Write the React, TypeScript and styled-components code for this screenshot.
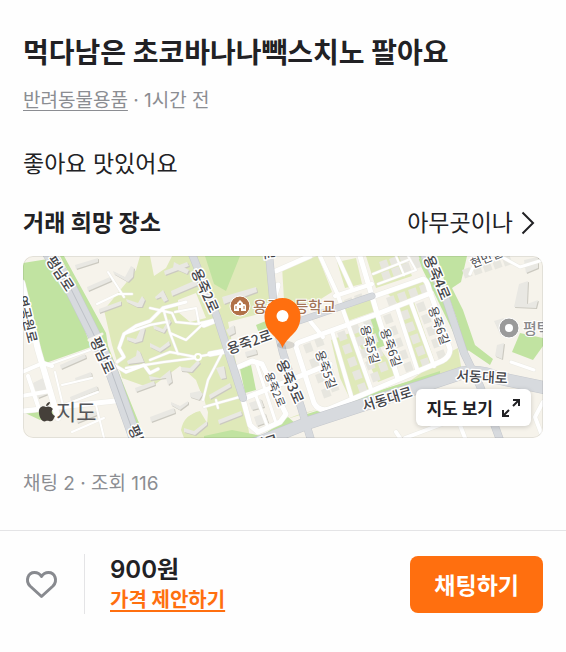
import React from 'react';
import styled, { createGlobalStyle } from 'styled-components';

const GlobalStyle = createGlobalStyle`
  * { box-sizing: border-box; }
  body {
    margin: 0;
    background: #fefefe;
    color: #212124;
    font-family: Inter, 'Noto Sans CJK KR', sans-serif;
    -webkit-font-smoothing: antialiased;
  }
  button { font-family: inherit; cursor: pointer; }
`;

const Page = styled.div`
  display: flex;
  flex-direction: column;
`;

const Article = styled.main`
  display: flex;
  flex-direction: column;
  padding: 33px 23px 32px;
`;

const Title = styled.h1`
  margin: 0;
  font-size: 28px;
  line-height: 40px;
  font-weight: 700;
`;

const Meta = styled.p`
  margin: 0;
  font-size: 19px;
  line-height: 28px;
  color: #8b8d92;
`;

const CategoryLink = styled.a`
  color: inherit;
  text-underline-offset: 3px;
`;

const Description = styled.p`
  margin: 0;
  font-size: 23px;
  line-height: 32px;
`;

const PlaceRow = styled.div`
  display: flex;
  align-items: center;
  justify-content: space-between;
`;

const PlaceHeading = styled.h2`
  margin: 0;
  font-size: 23px;
  line-height: 32px;
  font-weight: 700;
`;

const PlaceButton = styled.button`
  display: flex;
  align-items: center;
  gap: 8px;
  padding: 0 8px 0 0;
  border: 0;
  background: none;
  color: inherit;
  font-size: 23px;
  line-height: 32px;
`;

const Spacer = styled.div<{ $size: number }>`
  height: ${({ $size }) => $size}px;
`;

const MapCard = styled.section`
  position: relative;
  height: 182px;
  border-radius: 10px;
  overflow: hidden;
  background: #f6f3eb;

  &::after {
    content: '';
    position: absolute;
    inset: 0;
    border: 1px solid rgba(0, 0, 0, 0.08);
    border-radius: inherit;
    pointer-events: none;
  }
`;

const MapCanvas = styled.svg`
  display: block;
  width: 100%;
  height: 100%;
  font-family: 'Noto Sans CJK KR', sans-serif;
`;

const MapButton = styled.button`
  position: absolute;
  right: 12px;
  bottom: 12px;
  display: flex;
  align-items: center;
  gap: 8px;
  height: 37px;
  padding: 0 10px;
  border: 0;
  border-radius: 6px;
  background: #fff;
  color: #212124;
  font-size: 17px;
  font-weight: 700;
  box-shadow: 0 1px 5px rgba(0, 0, 0, 0.18);
`;

const BottomBar = styled.footer`
  display: flex;
  align-items: center;
  padding: 23px 23px 37px 24px;
  border-top: 1px solid #e4e4e6;
`;

const LikeButton = styled.button`
  display: flex;
  padding: 0;
  border: 0;
  background: none;
`;

const PriceBlock = styled.div`
  display: flex;
  flex: 1;
  flex-direction: column;
  align-items: flex-start;
  margin-left: 25px;
  padding-left: 25px;
  border-left: 1px solid #e4e4e6;
`;

const Price = styled.strong`
  font-size: 24px;
  line-height: 32px;
  font-weight: 600;
`;

const OfferLink = styled.a`
  color: #ff6f0f;
  font-size: 20px;
  line-height: 28px;
  font-weight: 700;
  text-underline-offset: 3px;
  text-decoration-thickness: 2px;
`;

const ChatButton = styled.button`
  height: 57px;
  padding: 0 24px;
  border: 0;
  border-radius: 8px;
  background: #ff6f0f;
  color: #fff;
  font-size: 23px;
  font-weight: 700;
`;

const LIGHT_GREEN = [
  'M140 256H268L274 310L228 322L243 398L250 438H206L208 412L196 380L180 366L150 388L122 378L112 345L104 310L126 283L136 270Z',
  'M282 266L318 256L332 292L300 312L284 300Z',
  'M337 262L356 258L362 284L345 288Z',
  'M366 256H404L412 276L376 288Z',
  'M341 302L372 298L376 311L345 322Z',
  'M331 340L350 333L372 392L350 399L340 378Z',
  'M352 330L364 326L398 374L378 382Z',
  'M384 290L430 276L436 292L398 304Z',
  'M398 306L414 302L436 365L418 368Z',
  'M284 420L410 381L450 352L458 348L462 372L300 414Z',
  'M181 430Q184 414 200 411L216 438H184Z',
];

const PARK_GREEN = [
  'M23 263L48 259L70 290L91 347L43 364L32 315L23 296Z',
  'M205 256H240L226 291L214 284Z',
  'M366 321L378 317L386 345L376 349Z',
  'M437 256H467L461 282L452 288L463 310L475 345L493 359L490 365L468 350L450 300Z',
  'M520 333L543 338V346L533 360L512 352Z',
  'M416 256L430 256L470 350L463 352Z',
  'M240 369L251 365L256 390L245 393Z',
  'M307 414L326 408L440 371L440 376L318 421L307 421Z',
  'M204 436L232 430L262 436L288 417L296 424L256 440H204Z',
  'M60 256H64L100 322L106 333L108 346L141 428L136 425L98 330Z',
  'M23 412L48 407L57 415L40 420Z',
  'M256 325L268 320L269 334L260 336Z',
];

const MINOR_ROADS = [
  { d: 'M22 283L38 350L58 418', w: 6 },
  { d: 'M22 372L43 363L52 366M28 376L38 406M22 396L50 391', w: 4 },
  { d: 'M22 411L115 401', w: 5 },
  { d: 'M48 365L90 350M55 372L64 410M62 385L92 378M64 405L98 392M72 432L104 418M96 405L104 438', w: 2 },
  { d: 'M97 304L118 294L132 294M108 272L124 297', w: 2 },
  { d: 'M117 362L124 357L119 348L124 334L136 326L150 321L163 308L186 302M114 365L126 372L144 365L150 373L158 369', w: 3 },
  { d: 'M150 360L170 352L196 357L228 351M126 368L164 362L196 358M163 308L170 333L178 354M124 334L150 325L166 322M150 308L172 313L176 322L196 324L213 320M175 312L196 308L199 324M170 333L186 340L204 323M222 353L208 380L203 400M204 407L243 396M216 400L218 408', w: 2 },
  { d: 'M210 354L226 351M204 325L214 321', w: 5 },
  { d: 'M236 368L252 361L262 364L282 406L286 414L280 422L258 432L250 425L243 399L330 364', w: 5 },
  { d: 'M256 362L276 423M256 396L268 428', w: 3 },
  { d: 'M276 271L310 256M272 306L278 285', w: 5 },
  { d: 'M320 256L337 293L371 389M337 256L352 289M335 296L372 284', w: 4 },
  { d: 'M360 256L377 313L398 379', w: 5 },
  { d: 'M372 297L423 279Q427 280 429 289L450 349Q450 357 442 361L329 409Q319 412 314 403L297 350Q294 344 300 342L377 314L431 293', w: 5 },
  { d: 'M332 331L352 399M397 307L418 372M411 303L434 366M310 321L323 337', w: 4 },
  { d: 'M396 256L404 275M408 256L416 270M373 274L408 260M378 284L416 270', w: 2 },
  { d: 'M470 274L478 256M511 362L534 370M500 256L520 267L543 260', w: 3 },
  { d: 'M543 402L535 417L543 438M465 438L458 420L466 397M400 438L396 432M405 438L450 421M500 437L493 412', w: 4 },
];

const MAJOR_ROADS = [
  { d: 'M48 252L70 287L93 333L112 373L137 443', w: 12 },
  { d: 'M192 254L217 317L243 398', w: 7 },
  { d: 'M269 254L275 320L283 353L301 407L311 440', w: 7 },
  { d: 'M296 322L372 296', w: 6 },
  { d: 'M424 254L446 299L464 353L480 386L500 440', w: 7 },
  { d: 'M250 446L305 424L363 405L420 387L462 373Q482 370 498 378L546 388', w: 12 },
];

const BUILDINGS = [
  'M75 265L98 258L98 262L76 269Z', 'M87 287L110 277L111 281L88 291Z', 'M99 309L121 301L121 305L99 313Z',
  'M60 365L85 354L86 358L61 369Z', 'M70 397L97 386L98 390L71 401Z', 'M75 378L91 372L92 376L76 382Z', 'M76 419L96 411L97 415L77 423Z',
  'M113 271L125 277L131 266L134 268L133 277L128 282L114 274Z',
  'M126 299L138 303L142 296L145 300L142 307L137 307L127 302Z',
  'M127 337L136 339L142 326L145 329L142 341L135 343L127 340Z',
  'M127 361L136 356L137 350L140 352L144 362L128 364Z',
  'M155 297L163 290L168 300L164 302L161 297L156 299Z',
  'M153 325L163 329L169 319L171 322L164 333L154 329Z',
  'M150 343L160 348L169 341L170 345L160 352L150 347Z',
  'M149 376L160 378L170 370L172 382L168 385L166 378L150 380Z',
  'M181 367L190 368L198 360L200 363L192 372L181 371Z',
  'M171 402L180 406L188 401L188 404L180 410L171 405Z',
  'M190 397L199 400L203 394L200 391L190 393Z',
  'M150 417L174 408L175 413L151 422Z', 'M184 428L194 431L207 421L207 425L195 435L184 432Z',
  'M209 395L230 383L231 387L210 399Z', 'M218 420L241 411L242 415L219 424Z',
  'M164 271L187 262L189 266L165 275Z', 'M171 291L196 280L198 285L172 296Z', 'M174 262L189 270L187 274L173 268Z',
  'M222 297L256 287L257 292L224 304Z', 'M226 330L234 325L235 333L229 336Z', 'M216 368L224 366L226 378L221 379Z',
  'M245 352L256 349L257 354L246 357Z', 'M249 403L261 399L264 407L252 410Z', 'M254 417L265 413L268 422L257 426Z',
  'M519 284L528 281L527 304L538 300L536 308L514 307Z', 'M524 260L538 257V268L526 273Z', 'M497 345L504 343L502 359L495 356Z', 'M494 321L504 318L500 334Z',
  'M33 383L43 378L48 394L38 398Z', 'M135 388L154 381L155 385L136 392Z',
];

const HOUSE_ROWS = [
  { x: 303, y: 345, n: 4, dx: 6, dy: 15 },
  { x: 314, y: 339, n: 4, dx: 5, dy: 15 },
  { x: 337, y: 333, n: 5, dx: 5, dy: 13 },
  { x: 350, y: 326, n: 5, dx: 5, dy: 12 },
  { x: 363, y: 322, n: 4, dx: 5, dy: 14 },
  { x: 383, y: 316, n: 5, dx: 5, dy: 12 },
  { x: 400, y: 312, n: 5, dx: 5, dy: 12 },
  { x: 416, y: 304, n: 5, dx: 5, dy: 12 },
  { x: 344, y: 300, n: 2, dx: 10, dy: -4 },
  { x: 379, y: 262, n: 4, dx: 10, dy: -3 },
  { x: 381, y: 273, n: 5, dx: 10, dy: -4 },
  { x: 386, y: 298, n: 4, dx: 11, dy: -4 },
  { x: 462, y: 270, n: 5, dx: 10, dy: -3 },
];

type RoadLabel = { text: string; x: number; y: number; r: number; size: number };

const ROAD_LABELS: RoadLabel[] = [
  { text: '평남로', x: 61, y: 273, r: 57, size: 14 },
  { text: '평남로', x: 103, y: 355, r: 66, size: 14 },
  { text: '평남로', x: 141, y: 443, r: 66, size: 14 },
  { text: '역공원로', x: 28, y: 319, r: 76, size: 13 },
  { text: '용죽2로', x: 206, y: 290, r: 66, size: 14 },
  { text: '용죽2로', x: 249, y: 341, r: -19, size: 14 },
  { text: '로', x: 270, y: 253, r: 84, size: 14 },
  { text: '용죽3로', x: 291, y: 381, r: 66, size: 14 },
  { text: '용죽2로', x: 276, y: 389, r: 68, size: 11 },
  { text: '용죽5길', x: 327, y: 369, r: 70, size: 12 },
  { text: '용죽5길', x: 371, y: 344, r: 74, size: 12 },
  { text: '용죽6길', x: 392, y: 347, r: 70, size: 12 },
  { text: '용죽6길', x: 440, y: 325, r: 70, size: 12 },
  { text: '용죽4로', x: 438, y: 277, r: 67, size: 14 },
  { text: '서동대로', x: 387, y: 398, r: -17, size: 14 },
  { text: '서동대로', x: 482, y: 376, r: 3, size: 14 },
  { text: '대로', x: 265, y: 442, r: -17, size: 14 },
  { text: '현민길', x: 486, y: 257, r: -22, size: 12 },
];

function HopePlaceMap() {
  return (
    <MapCanvas viewBox="23 256 520 182" preserveAspectRatio="xMidYMid slice" role="img" aria-label="거래 희망 장소 지도">
      <rect x="-400" y="0" width="1400" height="800" fill="#f6f3eb" />
      {LIGHT_GREEN.map((d) => <path key={d} d={d} fill="#dfe9b9" />)}
      <path d="M150 256H172L166 268L154 276ZM128 395L153 387L168 378L193 378L204 398L206 406L182 420L178 438H128Z" fill="#f6f3eb" />
      <path d="M178 300L196 293L206 318L190 322L178 312ZM228 340L256 330L276 345L280 395L262 364L252 358L238 362Z" fill="#f6f3eb" />
      {PARK_GREEN.map((d) => <path key={d} d={d} fill="#c1e3a1" />)}
      <g fill="#cbc9c0" transform="translate(1 1)">
        {BUILDINGS.map((d) => <path key={d} d={d} />)}
      </g>
      <g fill="#e9e8e3">
        {BUILDINGS.map((d) => <path key={d} d={d} />)}
      </g>
      <g fill="#e7e6df">
        {HOUSE_ROWS.map((row) =>
          Array.from({ length: row.n }, (_, i) => (
            <rect
              key={`${row.x}-${row.y}-${i}`}
              x={row.x + i * row.dx}
              y={row.y + i * row.dy}
              width="8"
              height="9"
              transform={`rotate(-20 ${row.x + i * row.dx} ${row.y + i * row.dy})`}
            />
          )),
        )}
      </g>
      <g fill="none" strokeLinejoin="round" strokeLinecap="round">
        {MINOR_ROADS.map((road) => <path key={road.d} d={road.d} stroke="#ecebe4" strokeWidth={road.w + 1} />)}
        {MINOR_ROADS.map((road) => <path key={road.d} d={road.d} stroke="#fff" strokeWidth={road.w} />)}
        {MAJOR_ROADS.map((road) => <path key={road.d} d={road.d} stroke="#c5c8cd" strokeWidth={road.w + 1} />)}
        {MAJOR_ROADS.map((road) => <path key={road.d} d={road.d} stroke="#d7dade" strokeWidth={road.w} />)}
        <path d="M48 252L70 287L93 333L112 373L137 443" stroke="#bcc0c6" strokeWidth="1" />
        <path d="M89 340L102 334" stroke="#f6f3eb" strokeWidth="3" />
      </g>
      <circle cx="198" cy="357" r="3" fill="#dfe9b9" stroke="#fff" strokeWidth="2" />
      <g
        fill="#45464a"
        stroke="#fff"
        strokeWidth="3"
        strokeLinejoin="round"
        paintOrder="stroke"
        textAnchor="middle"
        dominantBaseline="central"
      >
        {ROAD_LABELS.map((l) => (
          <text
            key={`${l.text}${l.x}`}
            fontSize={l.size}
            fontWeight={l.size > 12 ? 500 : 400}
            transform={`translate(${l.x} ${l.y}) rotate(${l.r})`}
          >
            {l.text}
          </text>
        ))}
      </g>
      <text x="253" y="312" fontSize="15" fontWeight="500" fill="#a37556" stroke="#fff" strokeWidth="2" paintOrder="stroke">
        용죽초등학교
      </text>
      <circle cx="240" cy="306" r="10" fill="#b17148" stroke="#fff" strokeWidth="1" />
      <path
        d="M234 306Q234 304 236 304H237V303L240 300L243 303V304H244Q246 304 246 306V311H241V308H239V311H234Z"
        fill="#fff"
      />
      <circle cx="240" cy="304" r="1" fill="#b17148" />
      <path d="M236 306V309M244 306V309" stroke="#b17148" strokeWidth="1" />
      <circle cx="509" cy="328" r="10" fill="#9a9a9a" stroke="#fff" strokeWidth="1" />
      <circle cx="509" cy="328" r="4" fill="#fff" />
      <text x="523" y="334" fontSize="15" fontWeight="500" fill="#8a8a8c" stroke="#fff" strokeWidth="2" paintOrder="stroke">
        평택
      </text>
      <ellipse cx="286" cy="345" rx="9" ry="4" fill="#000" opacity="0.12" />
      <path
        d="M282.500 348C281 343 276 338 271 333C267 329 264.500 323 264.500 316A18 18 0 0 1 300.500 316C300.500 323 298 329 294 333C289 338 284 343 282.500 348Z"
        fill="#ff6f0f"
      />
      <circle cx="282.500" cy="316" r="6" fill="#fff" />
      <g fill="#45403a">
        <path d="M53 409C51 406 47 406 46 407C43 405 38 407 39 413C39 418 43 423 46 421C49 420 50 423 53 420L55 416C51 414 51 411 53 409Z" />
        <path d="M46 406C46 404 48 402 50 402C50 404 48 406 46 406Z" />
      </g>
      <text x="56" y="420" fontSize="22" fill="#55565a">지도</text>
    </MapCanvas>
  );
}

const ChevronIcon = () => (
  <svg width="14" height="24" viewBox="0 0 14 24" fill="none" stroke="#212124" strokeWidth="2" aria-hidden="true">
    <path d="M1.500 1.500L12 12L1.500 22.500" />
  </svg>
);

const ExpandIcon = () => (
  <svg width="20" height="20" viewBox="0 0 20 20" fill="none" stroke="#212124" strokeWidth="2" aria-hidden="true">
    <path d="M12 2H18V8M18 2L12 8M2 12V18H8M2 18L8 12" />
  </svg>
);

const HeartIcon = () => (
  <svg width="35" height="32" viewBox="0 0 35 32" fill="none" stroke="#888a8f" strokeWidth="3" strokeLinejoin="round" aria-hidden="true">
    <path d="M17.500 28.500L6 18C1 12.500 4 4.500 10.500 4.500C14 4.500 16 6 17.500 8.500C19 6 21 4.500 24.500 4.500C31 4.500 34 12.500 29 18Z" />
  </svg>
);

export default function App() {
  return (
    <Page>
      <GlobalStyle />
      <Article>
        <Title>먹다남은 초코바나나빽스치노 팔아요</Title>
        <Spacer $size={14} />
        <Meta>
          <CategoryLink href="#category">반려동물용품</CategoryLink> · 1시간 전
        </Meta>
        <Spacer $size={33} />
        <Description>좋아요 맛있어요</Description>
        <Spacer $size={27} />
        <PlaceRow>
          <PlaceHeading>거래 희망 장소</PlaceHeading>
          <PlaceButton type="button">
            아무곳이나
            <ChevronIcon />
          </PlaceButton>
        </PlaceRow>
        <Spacer $size={17} />
        <MapCard>
          <HopePlaceMap />
          <MapButton type="button">
            지도 보기
            <ExpandIcon />
          </MapButton>
        </MapCard>
        <Spacer $size={32} />
        <Meta>채팅 2 · 조회 116</Meta>
      </Article>
      <BottomBar>
        <LikeButton type="button" aria-label="관심 등록">
          <HeartIcon />
        </LikeButton>
        <PriceBlock>
          <Price>900원</Price>
          <OfferLink href="#offer">가격 제안하기</OfferLink>
        </PriceBlock>
        <ChatButton type="button">채팅하기</ChatButton>
      </BottomBar>
    </Page>
  );
}
